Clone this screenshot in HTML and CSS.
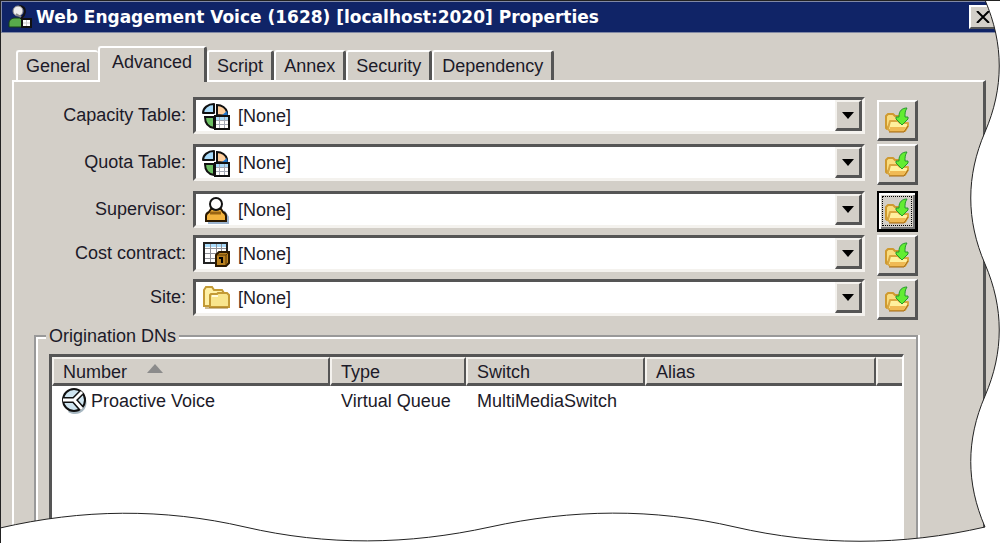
FILE: index.html
```html
<!DOCTYPE html>
<html lang="en">
<head>
<meta charset="utf-8">
<title>Web Engagement Voice (1628) [localhost:2020] Properties</title>
<link rel="stylesheet" href="styles.css">
</head>
<body>
<svg class="symbols" aria-hidden="true">
  <symbol id="capacity" viewBox="0 0 28 28">
    <path d="M12 2v9H1C1 6 6 2 12 2Z" fill="#a9dbfa" stroke="#111" stroke-width="2" stroke-linejoin="round"/>
    <path d="M3 15h9v11C6 25 3 21 3 15Z" fill="#6cc063" stroke="#111" stroke-width="2"/>
    <path d="M15 13V3c5 0 9 3 10 7v4Z" fill="#ffcf9d" stroke="#111" stroke-width="2"/>
    <path d="m19 14 6-5 1 5Z" fill="#1d73c9"/>
    <path d="M13 14h14v13H13Z" fill="#fff" stroke="#111" stroke-width="2"/>
    <path d="M14 15h12v3H14Z" fill="#a9dbfa"/>
    <path d="M14 18.500h12M14 22.500h12M17.500 15v11M22.500 15v11" stroke="#a5a9b5"/>
  </symbol>
  <symbol id="person" viewBox="0 0 28 28">
    <path d="M6 27h20v-6l-4-6" fill="none" stroke="#9cb4cf" stroke-width="2"/>
    <path d="M4 25v-5c0-2 1-3 3-4l2-3h10l2 3c2 1 3 2 3 4v5Z" fill="#f3b33d" stroke="#2a1800" stroke-width="2"/>
    <path d="M8 17h11" fill="none" stroke="#9a6513" stroke-width="3"/>
    <circle cx="14" cy="8" r="6" fill="#fff" stroke="#111" stroke-width="2"/>
  </symbol>
  <symbol id="contract" viewBox="0 0 28 28">
    <path d="M2 3h23v20H2Z" fill="#fff" stroke="#222" stroke-width="2"/>
    <path d="M3 4h21v3H3Z" fill="#a9dbfa"/>
    <path d="M3 8.500h21M3 13.500h21M3 18.500h21M8.500 4v18M14.500 4v18M19.500 4v18" stroke="#8f9097"/>
    <path d="m14 15 3-3h10v11l-3 3H14Z" fill="#b98120" stroke="#2a1800" stroke-width="2"/>
    <path d="M15 15h9v10M24 15l2-2" stroke="#5c3900" fill="none"/>
    <path d="M17 18h3v5" fill="none" stroke="#000" stroke-width="2"/>
  </symbol>
  <symbol id="folder" viewBox="0 0 28 28">
    <path d="M2 22V6l2-3h6l2 3h8l2 3v13Z" fill="#fff0a5" stroke="#c39a35" stroke-width="2"/>
    <path d="M8 23V11l1-1h6l1-1h9l2 2v12H8Z" fill="#f8e58c" stroke="#c39a35" stroke-width="2"/>
    <path d="M10 12h6" stroke="#fffbdc" stroke-width="2"/>
    <path d="M3 24h23" stroke="#9f7926"/>
  </symbol>
  <symbol id="browse" viewBox="0 0 28 28">
    <path d="M3 22V10l2-2h5l2 2h5v6H8L4 23Z" fill="#f9dc7e" stroke="#cf9a30" stroke-width="2" stroke-linejoin="round"/>
    <path d="m5 23 2-8h8l2 2h8v3l-3 5H7Z" fill="#fff09e" stroke="#d9a741" stroke-width="2" stroke-linejoin="round"/>
    <path d="M7 21h16l-2 4H7Z" fill="#f0ba55"/>
    <path d="M6 26h15l4-6" fill="none" stroke="#a96b12" stroke-width="1"/>
    <path d="M24 2c-5 0-8 3-8 8v1h-3v2l6 6 6-6v-2h-3c0-4 0-6 2-9Z" fill="#62ed32" stroke="#24982c" stroke-width="1"/>
  </symbol>
  <symbol id="queue" viewBox="0 0 28 28">
    <path d="M20 6c8 5 7 16-1 20-4 2-9 1-12-1" fill="#a8b8c2"/>
    <circle cx="13" cy="13" r="11" fill="#cfe5f0" stroke="#111" stroke-width="2"/>
    <path d="M3 13h10l7-7M13 13l7 8" fill="none" stroke="#111" stroke-width="6"/>
    <path d="M2 13h11l8-8M13 13l8 9" fill="none" stroke="#fff" stroke-width="3"/>
  </symbol>
</svg>

<main class="window">
  <header class="titlebar">
    <svg class="title-icon" viewBox="0 0 24 24" aria-hidden="true">
      <path d="M1 22v-4c0-3 3-5 6-5h5l4 4v5Z" fill="#58aa4b" stroke="#173d17"/>
      <path d="M11 1c6 0 7 5 5 9l-3 4" fill="none" stroke="#111" stroke-width="2"/>
      <circle cx="10" cy="6" r="5" fill="#eee" stroke="#888"/>
      <path d="m8 9 5 3" fill="none" stroke="#888" stroke-width="2"/>
      <path d="M14 14h9v8h-9Z" fill="#fff" stroke="#111" stroke-width="2"/>
      <path d="M18.500 15v6M15 18h7" stroke="#ccc"/>
    </svg>
    <h1 class="title">Web Engagement Voice (1628) [localhost:2020] Properties</h1>
    <button class="close" type="button" aria-label="Close"><svg viewBox="0 0 14 12" aria-hidden="true"><path d="m1 0 12 12M13 0 1 12" stroke="#000" stroke-width="2"/></svg></button>
  </header>

  <div class="tabs" role="tablist">
    <button class="tab" type="button" role="tab">General</button>
    <button class="tab tab-active" type="button" role="tab" aria-selected="true">Advanced</button>
    <button class="tab" type="button" role="tab">Script</button>
    <button class="tab" type="button" role="tab">Annex</button>
    <button class="tab" type="button" role="tab">Security</button>
    <button class="tab" type="button" role="tab">Dependency</button>
  </div>

  <section class="panel">
    <div class="fields">
      <div class="row row-tall row-first">
        <label class="label" for="f1">Capacity Table:</label>
        <div class="combo"><svg class="icon"><use href="#capacity"/></svg><select class="select" id="f1"><option>[None]</option></select><span class="arrow"></span></div>
        <button class="browse" type="button" aria-label="Browse capacity tables"><svg class="icon"><use href="#browse"/></svg></button>
      </div>
      <div class="row row-tall">
        <label class="label" for="f2">Quota Table:</label>
        <div class="combo"><svg class="icon"><use href="#capacity"/></svg><select class="select" id="f2"><option>[None]</option></select><span class="arrow"></span></div>
        <button class="browse" type="button" aria-label="Browse quota tables"><svg class="icon"><use href="#browse"/></svg></button>
      </div>
      <div class="row">
        <label class="label" for="f3">Supervisor:</label>
        <div class="combo"><svg class="icon"><use href="#person"/></svg><select class="select" id="f3"><option>[None]</option></select><span class="arrow"></span></div>
        <button class="browse browse-focused" type="button" aria-label="Browse supervisors"><svg class="icon"><use href="#browse"/></svg></button>
      </div>
      <div class="row">
        <label class="label" for="f4">Cost contract:</label>
        <div class="combo"><svg class="icon"><use href="#contract"/></svg><select class="select" id="f4"><option>[None]</option></select><span class="arrow"></span></div>
        <button class="browse" type="button" aria-label="Browse cost contracts"><svg class="icon"><use href="#browse"/></svg></button>
      </div>
      <div class="row">
        <label class="label" for="f5">Site:</label>
        <div class="combo"><svg class="icon"><use href="#folder"/></svg><select class="select" id="f5"><option>[None]</option></select><span class="arrow"></span></div>
        <button class="browse" type="button" aria-label="Browse sites"><svg class="icon"><use href="#browse"/></svg></button>
      </div>
    </div>

    <fieldset class="group">
      <legend class="legend">Origination DNs</legend>
      <div class="list">
        <table class="table">
          <colgroup><col class="col-number"><col class="col-type"><col class="col-switch"><col class="col-alias"><col></colgroup>
          <thead>
            <tr><th>Number<span class="sort"></span></th><th>Type</th><th>Switch</th><th>Alias</th><th class="last"></th></tr>
          </thead>
          <tbody>
            <tr><td class="name"><div class="entry"><svg class="icon"><use href="#queue"/></svg>Proactive Voice</div></td><td>Virtual Queue</td><td>MultiMediaSwitch</td><td></td><td></td></tr>
          </tbody>
        </table>
      </div>
    </fieldset>
  </section>

  <svg class="torn" viewBox="0 0 1000 543" preserveAspectRatio="none" aria-hidden="true">
    <path d="M985 0C1004 44 1004 88 985 132S966 220 985 264S1004 352 985 396S966 483 985 527C903 546 817 546 735 527S572 509 490 527S327 546 245 527S82 509 0 528V543H1000V0Z" fill="#fff"/>
    <path d="M985 0C1004 44 1004 88 985 132S966 220 985 264S1004 352 985 396S966 483 985 527C903 546 817 546 735 527S572 509 490 527S327 546 245 527S82 509 0 528" fill="none" stroke="#222"/>
  </svg>
</main>
</body>
</html>
```
FILE: styles.css
```css
* { box-sizing: border-box; }

body {
  margin: 0;
  background: #fff;
  color: #1c1a28;
  font: 18px/22px "Liberation Sans", Arial, sans-serif;
}

button, select { font: inherit; color: inherit; }

.symbols { position: absolute; width: 0; height: 0; }

.window {
  position: relative;
  display: flex;
  flex-direction: column;
  min-height: 100vh;
  overflow: hidden;
  border-top: 1px solid #222;
  border-left: 1px solid #222;
  background: #d3cfc8;
}

.titlebar {
  display: flex;
  align-items: center;
  height: 32px;
  padding: 0 3px 0 6px;
  border-top: 1px solid #8189a5;
  border-bottom: 1px solid #8189a5;
  border-left: 1px solid #8189a5;
  background: #102467;
}

.title-icon { width: 24px; height: 24px; margin-right: 4px; }

.title {
  flex: 1;
  margin: 0;
  color: #fff;
  font: bold 17px/22px "DejaVu Sans", sans-serif;
  white-space: nowrap;
}

.close {
  display: grid;
  place-items: center;
  width: 28px;
  height: 24px;
  padding: 0;
  border: 2px solid;
  border-color: #fff #555 #555 #fff;
  background: #d3cfc8;
}

.close svg { width: 14px; height: 12px; }

.tabs {
  display: flex;
  align-items: flex-end;
  padding: 13px 15px 0;
}

.tab {
  height: 30px;
  padding: 0 8px;
  border: solid;
  border-width: 2px 3px 0 2px;
  border-color: #fff #555 #555 #fff;
  border-radius: 3px 3px 0 0;
  background: #d3cfc8;
}

.tab:first-child { border-right-width: 0; }

.tab-active {
  z-index: 1;
  height: 36px;
  margin-bottom: -2px;
  padding: 0 12px 6px;
}

.panel {
  display: flex;
  flex: 1;
  flex-direction: column;
  margin: 0 14px 0 11px;
  padding: 15px 65px 0 20px;
  border: solid;
  border-width: 2px 3px 0 2px;
  border-color: #fff #555 #555 #fff;
}

.fields {
  display: flex;
  flex-direction: column;
  gap: 3px;
}

.row {
  display: grid;
  grid-template-columns: 152px 1fr 41px;
  align-items: start;
  min-height: 41px;
}

.row-tall { min-height: 44px; }
.row-first .browse { align-self: end; }

.label {
  padding: 7px 0;
  text-align: right;
}

.combo {
  display: flex;
  align-items: center;
  height: 37px;
  margin: 0 12px 0 7px;
  padding-left: 6px;
  border: 3px solid;
  border-color: #555 #f4f2ee #f4f2ee #555;
  background: #fff;
}

.icon { flex: none; width: 28px; height: 28px; }

.select {
  flex: 1;
  min-width: 0;
  padding: 0 8px;
  border: 0;
  appearance: none;
  background: transparent;
}

.arrow {
  display: grid;
  place-items: center;
  align-self: stretch;
  width: 27px;
  border: solid;
  border-width: 2px 3px 3px 2px;
  border-color: #f4f2ee #555 #555 #f4f2ee;
  background: #d3cfc8;
}

.arrow::before {
  content: "";
  border: solid transparent;
  border-width: 7px 6px 0;
  border-top-color: #000;
}

.browse {
  display: grid;
  place-items: center;
  height: 41px;
  padding: 0;
  border: solid;
  border-width: 2px 3px 3px 2px;
  border-color: #fff #555 #555 #fff;
  background: #d3cfc8;
}

.browse-focused {
  border-color: #000;
  box-shadow: inset 2px 2px #fff, inset -2px -2px #777;
}

.browse-focused .icon { outline: 1px dotted #000; }

.group {
  flex: 1;
  min-width: 0;
  margin: 5px 0 0;
  padding: 7px 12px 0 13px;
  border: 2px solid #999;
  border-bottom: 0;
  box-shadow: inset 2px 2px #fff, 2px 0 #fff;
}

.legend {
  position: relative;
  padding: 0 3px;
  margin-left: -3px;
  background: #d3cfc8;
}

.list {
  min-height: 188px;
  border: solid;
  border-width: 3px 2px 0 3px;
  border-color: #555 #fff #555 #555;
  background: #fff;
}

.table {
  width: 100%;
  border-collapse: separate;
  border-spacing: 0;
  table-layout: fixed;
}

.col-number { width: 278px; }
.col-type { width: 136px; }
.col-switch { width: 179px; }
.col-alias { width: 231px; }

th {
  height: 29px;
  padding: 2px 9px 0;
  border: solid;
  border-width: 2px 2px 3px 2px;
  border-color: #f4f2ee #555 #555 #f4f2ee;
  background: #d3cfc8;
  font-weight: normal;
  line-height: 22px;
  text-align: left;
}

.last { border-right: 0; }

td {
  height: 30px;
  padding: 0 11px;
  white-space: nowrap;
}

.name { padding: 0 9px; }

.entry { display: flex; align-items: center; gap: 2px; }

.sort {
  display: inline-block;
  margin-left: 20px;
  border: solid transparent;
  border-width: 0 8px 9px;
  border-bottom-color: #8b8b8b;
  vertical-align: 5px;
}

.torn {
  position: absolute;
  inset: -1px 0 0 -1px;
  z-index: 2;
  width: calc(100% + 1px);
  height: calc(100% + 1px);
  pointer-events: none;
}
```
